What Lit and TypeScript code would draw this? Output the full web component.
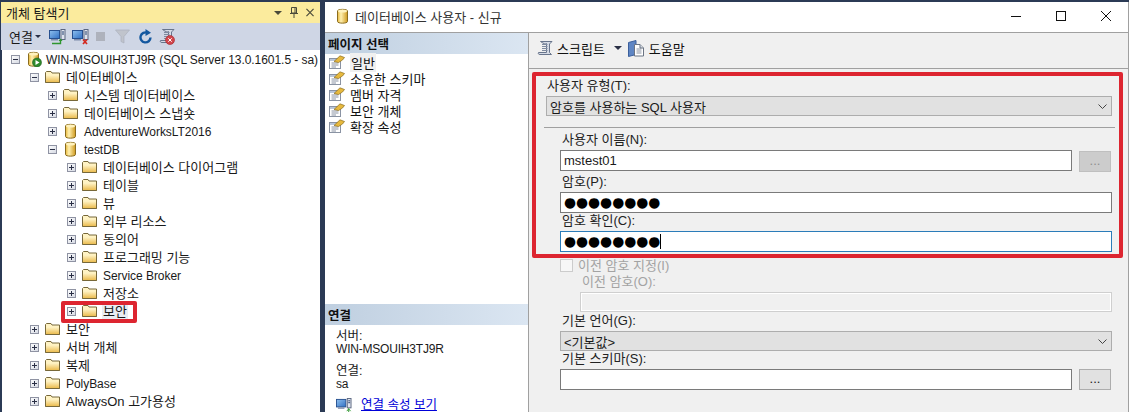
import { LitElement, html, css, svg } from 'lit';
import { customElement } from 'lit/decorators.js';

type TreeRow = {
	level: number;
	label: string;
	icon?: 'folder' | 'db' | 'server';
	open?: boolean;
	latin?: boolean;
	picked?: boolean;
};

const TREE: TreeRow[] = [
	{ level: 0, label: 'WIN-MSOUIH3TJ9R (SQL Server 13.0.1601.5 - sa)', icon: 'server', open: true, latin: true },
	{ level: 1, label: '데이터베이스', open: true },
	{ level: 2, label: '시스템 데이터베이스' },
	{ level: 2, label: '데이터베이스 스냅숏' },
	{ level: 2, label: 'AdventureWorksLT2016', icon: 'db', latin: true },
	{ level: 2, label: 'testDB', icon: 'db', open: true, latin: true },
	{ level: 3, label: '데이터베이스 다이어그램' },
	{ level: 3, label: '테이블' },
	{ level: 3, label: '뷰' },
	{ level: 3, label: '외부 리소스' },
	{ level: 3, label: '동의어' },
	{ level: 3, label: '프로그래밍 기능' },
	{ level: 3, label: 'Service Broker', latin: true },
	{ level: 3, label: '저장소' },
	{ level: 3, label: '보안', picked: true },
	{ level: 1, label: '보안' },
	{ level: 1, label: '서버 개체' },
	{ level: 1, label: '복제' },
	{ level: 1, label: 'PolyBase', latin: true },
	{ level: 1, label: 'AlwaysOn 고가용성' },
];

const PAGES = ['일반', '소유한 스키마', '멤버 자격', '보안 개체', '확장 속성'];

const expander = (open?: boolean) => html`<svg class="exp" width="9" height="9" viewBox="0 0 9 9">
	<rect x=".5" y=".5" width="8" height="8" fill="url(#expFill)" stroke="#8f93a3"/>
	<path d="M2 4.500h5" stroke="#2a2f45"/>
	${open ? '' : svg`<path d="M4.500 2v5" stroke="#2a2f45"/>`}
</svg>`;

const folder = html`<svg class="ico" width="16" height="14" viewBox="0 0 16 14">
	<path d="M.5 12.500V2.500L1.500 1.500H6L7 3H14.500V12.500Z" fill="#fff3c4" stroke="#77683a"/>
	<path d="M1 5H15V12.500H1Z" fill="url(#folderFill)"/>
	<path d="M.5 12.500H14.500V3.500" fill="none" stroke="#77683a"/>
</svg>`;

const cylinder = svg`
	<path d="M2.500 3C2.500 .8 12.500 .8 12.500 3V13.500C12.500 15.700 2.500 15.700 2.500 13.500Z" fill="url(#dbFill)" stroke="#8a6c1e"/>
	<ellipse cx="7.500" cy="3" rx="4.500" ry="1.500" fill="#fff2bd"/>
`;

const dbIcon = html`<svg class="ico" width="16" height="16" viewBox="0 0 16 16">${cylinder}</svg>`;

const serverIcon = html`<svg class="ico srv" width="16" height="16" viewBox="0 0 16 16">
	${cylinder}
	<circle cx="11" cy="11.500" r="4.500" fill="#2f8a2c" stroke="#1c5c1c" stroke-width=".6"/>
	<path d="M9.500 9v5l4-2.500Z" fill="#fff"/>
</svg>`;

const monitor = svg`
	<rect x=".5" y="1.500" width="10" height="8" fill="url(#screenFill)" stroke="#27508f"/>
	<rect x="2" y="10" width="7" height="1.500" fill="#7e8cab"/>
	<rect x="12" y=".5" width="4" height="10" fill="#dfe4ee" stroke="#5a6680"/>
	<path d="M13 3h2M13 5h2" stroke="#25406e"/>
`;

const connectIcon = html`<svg width="17" height="16" viewBox="0 0 17 16">
	${monitor}
	<path d="M3 14.500H11.500V10.500" fill="none" stroke="#2f962f" stroke-width="1.400"/>
	<path d="M9.500 12L11.500 9.500 13.500 12Z" fill="#2f962f"/>
</svg>`;

const disconnectIcon = html`<svg width="17" height="16" viewBox="0 0 17 16">
	${monitor}
	<path d="M11 10.500l4 4.500M15 10.500l-4 4.500" stroke="#d3281e" stroke-width="1.700"/>
</svg>`;

const stopIcon = html`<svg width="9" height="9" viewBox="0 0 9 9"><rect width="9" height="9" fill="#aeb2bc"/></svg>`;

const funnelIcon = html`<svg width="15" height="15" viewBox="0 0 15 15">
	<path d="M.5 1h14L9 7.500V14L6 12.500V7.500Z" fill="#c0c4cc" stroke="#aab0bb" stroke-width=".7"/>
</svg>`;

const refreshIcon = html`<svg width="13" height="15" viewBox="0 0 13 15">
	<path d="M8.500 3.800A5 5 0 1 0 11.500 8.500" fill="none" stroke="#14589f" stroke-width="2.400"/>
	<path d="M6.500 0L12 3.800 6.500 7Z" fill="#14589f"/>
</svg>`;

const scrollPath = svg`
	<path d="M3.500 1.500H15L12.500 4V12.500L14.500 14.500H3C1.500 14.500 .8 13.500 1.500 12.500H9.500V3.500C9 4.500 7 4 3.500 1.500Z" fill="#d5dbe6" stroke="#68758c"/>
	<path d="M5 4.500H10.500M5 6.500H10.500M5 8.500H10.500M5 10.500H10.500" stroke="#7f8ba0"/>
`;

const scriptStopIcon = html`<svg width="16" height="17" viewBox="0 0 16 17">
	${scrollPath}
	<circle cx="11" cy="12" r="4.500" fill="#d2464c" stroke="#a5262c" stroke-width=".6"/>
	<path d="M9.300 10.300l3.400 3.400M12.700 10.300l-3.400 3.400" stroke="#fff"/>
</svg>`;

const scriptIcon = html`<svg width="16" height="16" viewBox="0 0 16 16">${scrollPath}</svg>`;

const helpIcon = html`<svg width="17" height="17" viewBox="0 0 17 17">
	<path d="M.5 2.500L8 .5V14.500L.5 16.500Z" fill="#5f86c4" stroke="#3b5f9c"/>
	<path d="M6.500 4.500H12L15.500 8V16H6.500Z" fill="#fff" stroke="#6b7483"/>
	<path d="M8.500 9H13.500M8.500 11H13.500M8.500 13H13.500" stroke="#8d95a3"/>
	<path d="M12 4.500V8H15.500" fill="#d8dde6" stroke="#6b7483"/>
</svg>`;

const pageIcon = html`<svg class="ico" width="16" height="14" viewBox="0 0 16 14">
	<rect x=".5" y="3.500" width="11" height="10" fill="#fff" stroke="#8a93a3"/>
	<rect x="1" y="4" width="10" height="2" fill="#b9c6da"/>
	<path d="M2.500 8H9.500M2.500 10H9.500M2.500 12H7" stroke="#8a93a3"/>
	<path d="M5 6.500L11 .8 15.500 2.500 13.500 5 9.500 7.500Z" fill="#e7b93e" stroke="#8a6c1e" stroke-width=".7"/>
</svg>`;

const chevron = html`<svg class="chev" width="9" height="5" viewBox="0 0 9 5">
	<path d="M.5 .5L4.500 4.500 8.500 .5" fill="none" stroke="#444"/>
</svg>`;

@customElement('app-root')
export default class AppRoot extends LitElement {

	static get styles() {
		return css`
			:host {
				display: block;
				position: relative;
				width: 1129px;
				height: 412px;
				overflow: hidden;
				background: #2b3a55;
				color: #1a1a1a;
				font-family: "Liberation Sans", "Noto Sans CJK KR", sans-serif;
				font-size: 13px;
			}

			.defs {
				position: absolute;
				width: 0;
				height: 0;
			}

			.shell {
				display: flex;
				height: 412px;
				padding-top: 2px;
				box-sizing: border-box;
			}

			svg {
				display: block;
				flex: none;
			}

			/* object explorer */
			.explorer {
				width: 319px;
				margin-left: 1px;
				margin-right: 5px;
				display: flex;
				flex-direction: column;
			}

			.paneTitle {
				height: 21px;
				flex: none;
				display: flex;
				align-items: center;
				background: #fbeb9d;
				padding: 0 6px 0 5px;
			}

			.paneTitle .name {
				flex: 1;
			}

			.paneButtons {
				display: flex;
				align-items: center;
				gap: 8px;
			}

			.paneTools {
				height: 27px;
				flex: none;
				display: flex;
				align-items: center;
				background: #cfd6e5;
				padding-left: 8px;
				box-sizing: border-box;
			}

			.paneTools .connect {
				width: 26px;
			}

			.dropArrow {
				width: 0;
				height: 0;
				border-left: 3px solid transparent;
				border-right: 3px solid transparent;
				border-top: 3px solid #2a2f45;
				flex: none;
			}

			.paneTools .dropArrow {
				margin-right: 8px;
			}

			.connectGap { margin-right: 6px; }
			.stop { margin: 0 10px 0 7px; }
			.funnel { margin-right: 9px; }
			.refresh { margin-right: 7px; }

			.tree {
				flex: 1;
				background: #fff;
				margin-left: 1px;
				overflow: hidden;
			}

			.row {
				height: 18px;
				display: flex;
				align-items: center;
				white-space: nowrap;
			}

			.exp {
				margin-right: 6px;
			}

			.ico {
				margin-right: 4px;
			}

			.ico.srv {
				margin-right: 3px;
			}

			.row .label {
				padding: 1px 1px 0;
				line-height: 16px;
			}

			.row .latin {
				font-size: 12px;
				letter-spacing: -.05px;
			}

			.row .picked {
				background: #e9edf3;
			}

			/* dialog */
			.dialog {
				flex: 1;
				display: flex;
				flex-direction: column;
				background: #f0f0f0;
				border-right: 1px solid #a0a0a0;
			}

			.titleBar {
				height: 31px;
				box-sizing: border-box;
				flex: none;
				display: flex;
				align-items: center;
				background: #fff;
				padding: 0 17px 2px 10px;
				border-bottom: 1px solid #a0a0a0;
			}

			.titleBar .ico {
				margin-right: 4px;
			}

			.titleBar .name {
				flex: 1;
				color: #333;
			}

			.winButtons {
				display: flex;
				align-items: center;
				gap: 35px;
			}

			.body {
				flex: 1;
				display: flex;
				min-height: 0;
			}

			.side {
				width: 203px;
				flex: none;
				display: flex;
				flex-direction: column;
				background: #fff;
				border-right: 1px solid #a0a0a0;
			}

			.sideHead {
				height: 21px;
				flex: none;
				display: flex;
				align-items: center;
				padding-left: 3px;
				font-weight: 700;
				font-size: 12.500px;
				color: #111;
				background: linear-gradient(90deg, #bfcfe0, #dbe6f2);
			}

			.pages {
				flex: 1;
			}

			.page {
				height: 16px;
				display: flex;
				align-items: center;
				padding-left: 4px;
				color: #111;
			}

			.page .ico {
				margin-right: 5px;
			}

			.page .current {
				background: #f0f0f0;
				padding: 0 1px;
			}

			.conn {
				height: 87px;
				flex: none;
				padding: 5px 0 0 11px;
				line-height: 13px;
				font-size: 12.500px;
				box-sizing: border-box;
			}

			.connGap {
				margin-top: 9px;
			}

			.latinSmall {
				font-size: 12px;
				letter-spacing: -.2px;
			}

			.connLink {
				display: flex;
				align-items: center;
				gap: 9px;
				margin-top: 7px;
				color: #0000d8;
				text-decoration: underline;
			}

			.main {
				flex: 1;
				display: flex;
				flex-direction: column;
				min-width: 0;
			}

			.mainTools {
				height: 36px;
				box-sizing: border-box;
				flex: none;
				display: flex;
				align-items: center;
				padding: 0 0 5px 8px;
				border-bottom: 1px solid #a0a0a0;
				color: #111;
			}

			.mainTools .txt {
				margin-left: 4px;
			}

			.mainTools .dropArrow {
				margin: 0 6px 0 9px;
				border-left-width: 4px;
				border-right-width: 4px;
				border-top-width: 4px;
			}

			.form {
				flex: 1;
				padding: 10px 16px 0 17px;
			}

			.lbl {
				height: 14px;
				line-height: 14px;
				white-space: nowrap;
				color: #222;
				padding-left: 1px;
			}

			.inset {
				padding-left: 14px;
			}

			.inset .lbl {
				padding-left: 2px;
			}

			.combo, .input {
				box-sizing: border-box;
				display: flex;
				align-items: center;
				white-space: nowrap;
			}

			.combo {
				height: 20px;
				margin-top: 3px;
				background: #e1e1e1;
				border: 1px solid #adadad;
				padding: 0 4px 0 3px;
				justify-content: space-between;
			}

			.input {
				height: 21px;
				margin-top: 3px;
				background: #fff;
				border: 1px solid #7a7a7a;
				padding: 0 3px;
				font-size: 13px;
			}

			.input.focus {
				border-color: #2b7cb9;
			}

			.input.off {
				height: 20px;
				margin-top: 3px;
				margin-left: 20px;
				background: #f0f0f0;
				border-color: #cfcfcf;
				box-shadow: inset 0 0 0 1px #fff;
			}

			.dots {
				font-family: "DejaVu Sans", sans-serif;
				font-size: 13.800px;
				line-height: 19px;
				color: #000;
			}

			.caret {
				width: 1px;
				height: 15px;
				background: #000;
			}

			.sep {
				height: 1px;
				background: #a0a0a0;
				margin: 11px -3px 0 -2px;
			}

			.withButton {
				display: flex;
				gap: 7px;
			}

			.withButton .input {
				flex: 1;
			}

			.more {
				width: 32px;
				height: 21px;
				box-sizing: border-box;
				flex: none;
				margin: 3px 1px 0 0;
				border: 1px solid #adadad;
				background: #e1e1e1;
				text-align: center;
				line-height: 18px;
			}

			.more.off {
				margin-top: 4px;
				background: #cccccc;
				border-color: #bfbfbf;
				color: #8f8f8f;
			}

			.check {
				display: flex;
				align-items: center;
				height: 13px;
				margin-top: 7px;
				color: #a3a3a3;
			}

			.check .box {
				width: 13px;
				height: 13px;
				box-sizing: border-box;
				border: 1px solid #cccccc;
				background: #f7f7f7;
				margin-right: 5px;
			}

			.check .text {
				margin-top: -3px;
			}

			.offLabel {
				color: #a3a3a3;
			}

			.inset .offLabel {
				padding-left: 22px;
			}

			.mt1 { margin-top: 1px; }
			.mt2 { margin-top: 2px; }
			.mt3 { margin-top: 3px; }
			.mt5 { margin-top: 5px; }

			/* red annotation boxes drawn on top of the screenshot */
			.mark {
				position: absolute;
				box-sizing: border-box;
				border: 4px solid #dd2530;
				border-radius: 2px;
				pointer-events: none;
			}

			.markForm {
				left: 532px;
				top: 72px;
				width: 591px;
				height: 186px;
			}

			.markTree {
				left: 61px;
				top: 301px;
				width: 76px;
				height: 22px;
			}
		`;
	}

	renderRow(row: TreeRow) {
		let icon = folder;
		if (row.icon == 'db') icon = dbIcon;
		if (row.icon == 'server') icon = serverIcon;
		const pad = 9 + Math.round(row.level * 18.67);
		return html`
			<div class="row" style="padding-left:${pad}px">
				${expander(row.open)}
				${icon}
				<span class="label ${row.latin ? 'latin' : ''} ${row.picked ? 'picked' : ''}">${row.label}</span>
			</div>
		`;
	}

	renderExplorer() {
		return html`
			<div class="explorer">
				<div class="paneTitle">
					<span class="name">개체 탐색기</span>
					<div class="paneButtons">
						<svg width="8" height="4" viewBox="0 0 8 4"><path d="M0 0H8L4 4Z" fill="#4a4a3a"/></svg>
						<svg width="8" height="11" viewBox="0 0 8 11"><path d="M1.500 .5H6.500V6H1.500ZM0 6.500H8M4 7V11M5 1V6" fill="none" stroke="#4a4a3a"/></svg>
						<svg width="8" height="9" viewBox="0 0 9 9"><path d="M.5 .5L8.500 8.500M8.500 .5L.5 8.500" stroke="#4a4a3a" stroke-width="1.300"/></svg>
					</div>
				</div>
				<div class="paneTools">
					<span class="connect">연결</span>
					<span class="dropArrow"></span>
					<span class="connectGap">${connectIcon}</span>
					${disconnectIcon}
					<span class="stop">${stopIcon}</span>
					<span class="funnel">${funnelIcon}</span>
					<span class="refresh">${refreshIcon}</span>
					${scriptStopIcon}
				</div>
				<div class="tree">${TREE.map((r) => this.renderRow(r))}</div>
			</div>
		`;
	}

	renderSide() {
		return html`
			<div class="side">
				<div class="sideHead">페이지 선택</div>
				<div class="pages">
					${PAGES.map((p, i) => html`
						<div class="page">${pageIcon}<span class="${i == 0 ? 'current' : ''}">${p}</span></div>
					`)}
				</div>
				<div class="sideHead">연결</div>
				<div class="conn">
					<div>서버:</div>
					<div class="latinSmall">WIN-MSOUIH3TJ9R</div>
					<div class="connGap">연결:</div>
					<div class="latinSmall">sa</div>
					<div class="connLink">
						<svg width="16" height="15" viewBox="0 0 17 16">${monitor}<path d="M13.500 11V16M11.500 14L13.500 11.500 15.500 14" fill="none" stroke="#2f962f"/></svg>
						<span>연결 속성 보기</span>
					</div>
				</div>
			</div>
		`;
	}

	renderForm() {
		return html`
			<div class="form">
				<div class="lbl">사용자 유형(T):</div>
				<div class="combo"><span>암호를 사용하는 SQL 사용자</span>${chevron}</div>
				<div class="sep"></div>
				<div class="inset">
					<div class="lbl mt5">사용자 이름(N):</div>
					<div class="withButton">
						<div class="input">mstest01</div>
						<div class="more off">...</div>
					</div>
					<div class="lbl mt3">암호(P):</div>
					<div class="input"><span class="dots">●●●●●●●●</span></div>
					<div class="lbl mt1">암호 확인(C):</div>
					<div class="input focus"><span class="dots">●●●●●●●●</span><span class="caret"></span></div>
					<div class="check"><span class="box"></span><span class="text">이전 암호 지정(I)</span></div>
					<div class="lbl mt3 offLabel">이전 암호(O):</div>
					<div class="input off"></div>
					<div class="lbl mt2">기본 언어(G):</div>
					<div class="combo"><span>&lt;기본값&gt;</span>${chevron}</div>
					<div class="lbl mt1">기본 스키마(S):</div>
					<div class="withButton">
						<div class="input"></div>
						<div class="more">...</div>
					</div>
				</div>
			</div>
		`;
	}

	renderDialog() {
		return html`
			<div class="dialog">
				<div class="titleBar">
					${dbIcon}
					<span class="name">데이터베이스 사용자 - 신규</span>
					<div class="winButtons">
						<svg width="10" height="10" viewBox="0 0 10 10"><path d="M0 5.500H10" stroke="#111"/></svg>
						<svg width="10" height="10" viewBox="0 0 10 10"><rect x=".5" y=".5" width="9" height="9" fill="none" stroke="#111"/></svg>
						<svg width="10" height="10" viewBox="0 0 10 10"><path d="M0 0L10 10M10 0L0 10" stroke="#111"/></svg>
					</div>
				</div>
				<div class="body">
					${this.renderSide()}
					<div class="main">
						<div class="mainTools">
							${scriptIcon}
							<span class="txt">스크립트</span>
							<span class="dropArrow"></span>
							${helpIcon}
							<span class="txt">도움말</span>
						</div>
						${this.renderForm()}
					</div>
				</div>
			</div>
		`;
	}

	render() {
		return html`
			<svg class="defs">
				<defs>
					<linearGradient id="expFill" x1="0" y1="0" x2="1" y2="1">
						<stop offset="0" stop-color="#ffffff"/>
						<stop offset="1" stop-color="#d4d8e2"/>
					</linearGradient>
					<linearGradient id="folderFill" x1="0" y1="0" x2="0" y2="1">
						<stop offset="0" stop-color="#fff4c8"/>
						<stop offset="1" stop-color="#eab949"/>
					</linearGradient>
					<linearGradient id="dbFill" x1="0" y1="0" x2="1" y2="0">
						<stop offset="0" stop-color="#e8b93c"/>
						<stop offset=".35" stop-color="#fff0b0"/>
						<stop offset="1" stop-color="#cf9a1f"/>
					</linearGradient>
					<linearGradient id="screenFill" x1="0" y1="0" x2="1" y2="1">
						<stop offset="0" stop-color="#8fc0ee"/>
						<stop offset="1" stop-color="#2f6fc4"/>
					</linearGradient>
				</defs>
			</svg>
			<div class="shell">
				${this.renderExplorer()}
				${this.renderDialog()}
			</div>
			<div class="mark markForm"></div>
			<div class="mark markTree"></div>
		`;
	}
}
